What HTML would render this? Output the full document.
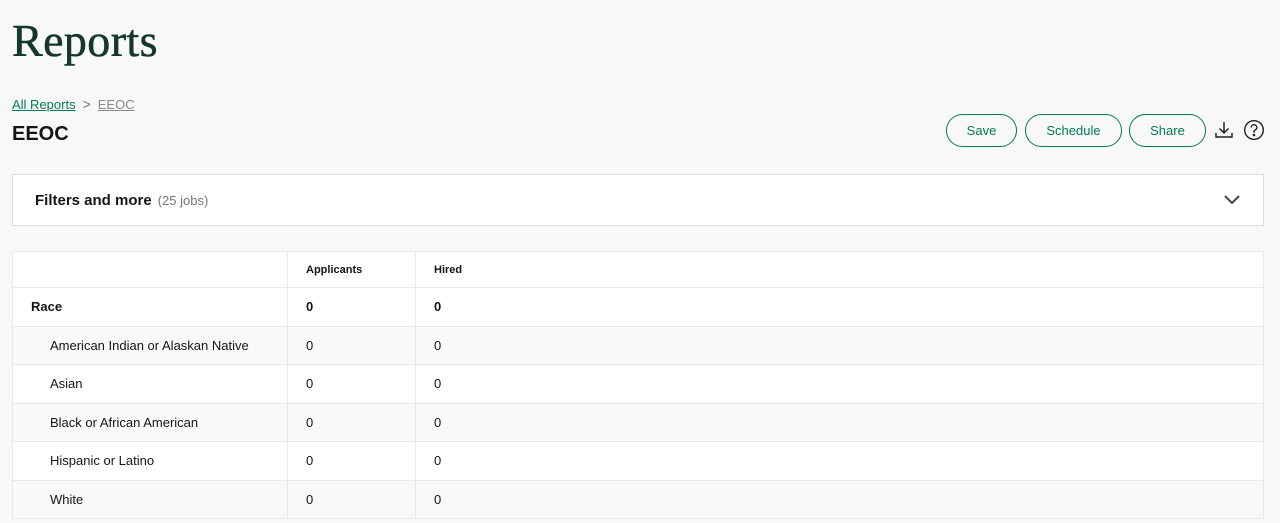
<!DOCTYPE html>
<html><head><style>
*{box-sizing:border-box;margin:0;padding:0}
body{width:1280px;height:523px;overflow:hidden;background:#f8f8f8;font-family:"Liberation Sans",sans-serif;color:#151515;position:relative}
.h1{position:absolute;left:12px;top:14px;font-family:"Liberation Serif",serif;font-size:46px;color:#15372c;letter-spacing:0.4px;-webkit-text-stroke:0.5px #15372c}
.bc{position:absolute;left:12px;top:96px;font-size:13px}
.bc a{color:#047957;text-decoration:underline}
.bc span.g{color:#888;text-decoration:underline}
.bc .sep{color:#777;margin:0 7px;font-size:14px}
.t{position:absolute;left:12px;top:123px;font-size:20px;font-weight:bold}
.btn{position:absolute;top:114px;height:33px;border:1px solid #047957;border-radius:17px;color:#047957;font-size:13px;display:flex;align-items:center;justify-content:center;background:#f8f8f8}
.filt{position:absolute;left:12px;top:174px;width:1252px;height:52px;background:#fff;border:1px solid #ddd;display:flex;align-items:center;padding-left:22px}
.filt b{font-size:15px}
.filt span{color:#767676;font-size:13px;margin-left:6px}
table{position:absolute;left:12px;top:251px;width:1252px;border-collapse:collapse;background:#fff;font-size:13px}
td{border:1px solid #e8e8e8;height:38.5px;padding-left:18px}
td:nth-child(1){width:275px}
td:nth-child(2){width:128px}
tr.h td{height:36px;font-size:11px;font-weight:bold}
tr.g td{background:#f9f9f9}
tr.s td:first-child{padding-left:37px}
</style></head><body>
<div class="h1">Reports</div>
<div class="bc"><a>All Reports</a><span class="sep">&gt;</span><span class="g">EEOC</span></div>
<div class="t">EEOC</div>
<div class="btn" style="left:946px;width:71px">Save</div>
<div class="btn" style="left:1025px;width:97px">Schedule</div>
<div class="btn" style="left:1129px;width:77px">Share</div>
<svg style="position:absolute;left:1214px;top:120px" width="20" height="20" viewBox="0 0 20 20" fill="none" stroke="#222" stroke-width="1.5"><path d="M10 2v11M5.5 8.5L10 13l4.5-4.5M2 13v4h16v-4"/></svg>
<svg style="position:absolute;left:1243px;top:119px" width="22" height="22" viewBox="0 0 22 22" fill="none" stroke="#222" stroke-width="1.4"><circle cx="11" cy="11" r="9.3"/><path d="M8.2 8.5a2.8 2.8 0 1 1 4 2.5c-.8.4-1.2 1-1.2 1.9v.8"/><circle cx="11" cy="16" r=".6" fill="#222"/></svg>
<div class="filt"><b>Filters and more</b><span>(25 jobs)</span>
<svg style="position:absolute;right:22px;top:18px" width="18" height="12" viewBox="0 0 18 12" fill="none" stroke="#444" stroke-width="2"><path d="M2 3l7 7 7-7"/></svg></div>
<table>
<tr class="h"><td></td><td>Applicants</td><td>Hired</td></tr>
<tr><td><b>Race</b></td><td><b>0</b></td><td><b>0</b></td></tr>
<tr class="g s"><td>American Indian or Alaskan Native</td><td>0</td><td>0</td></tr>
<tr class="s"><td>Asian</td><td>0</td><td>0</td></tr>
<tr class="g s"><td>Black or African American</td><td>0</td><td>0</td></tr>
<tr class="s"><td>Hispanic or Latino</td><td>0</td><td>0</td></tr>
<tr class="g s"><td>White</td><td>0</td><td>0</td></tr>
</table>
</body></html>
